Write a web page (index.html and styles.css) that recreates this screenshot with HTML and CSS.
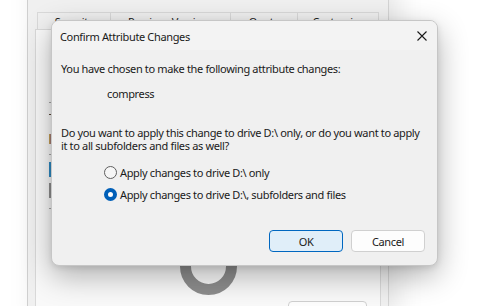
FILE: index.html
```html
<!DOCTYPE html>
<html>
<head>
<meta charset="utf-8">
<link rel="stylesheet" href="styles.css">
</head>
<body>
<div class="desktop">
  <div class="bgwin">
    <div class="tabs">
      <div class="tab t1">Security</div>
      <div class="tab t2">Previous Versions</div>
      <div class="tab t3">Quota</div>
      <div class="tab t4">Customize</div>
    </div>
    <div class="panel">
      <div class="marks">
        <div class="mk line"></div>
        <div class="mk dark"></div>
        <div class="mk icon"></div>
        <div class="mk line"></div>
        <div class="mk blue"></div>
        <div class="mk gray"></div>
        <div class="mk line"></div>
      </div>
      <div class="ring"></div>
      <div class="bgbtn"></div>
    </div>
  </div>

  <div class="dialog">
    <div class="titlebar">
      <span class="title">Confirm Attribute Changes</span>
      <svg class="close" width="10" height="10" viewBox="0 0 10 10"><path d="M0.5 0.5 L9.5 9.5 M9.5 0.5 L0.5 9.5" stroke="#1a1a1a" stroke-width="1.1" fill="none"/></svg>
    </div>
    <div class="content">
      <p class="line">You have chosen to make the following attribute changes:</p>
      <p class="line attr">compress</p>
      <p class="line question">Do you want to apply this change to drive D:\ only, or do you want to apply it to all subfolders and files as well?</p>
      <div class="options">
        <label class="opt"><span class="radio"></span>Apply changes to drive D:\ only</label>
        <label class="opt"><span class="radio on"></span>Apply changes to drive D:\, subfolders and files</label>
      </div>
      <div class="buttons">
        <div class="btn primary">OK</div>
        <div class="btn">Cancel</div>
      </div>
    </div>
  </div>
</div>
</body>
</html>
```

FILE: styles.css
```css
html, body {
  margin: 0;
  padding: 0;
  width: 493px;
  height: 306px;
  overflow: hidden;
  background: #ffffff;
  font-family: "Noto Sans", "Open Sans", sans-serif;
  font-size: 11px;
  letter-spacing: -0.35px;
  color: #1a1a1a;
}
.desktop {
  position: relative;
  width: 493px;
  height: 306px;
  overflow: hidden;
}
.bgwin {
  position: absolute;
  left: 27px;
  top: -20px;
  width: 362px;
  height: 340px;
  background: #f0f0f0;
  border-left: 1px solid #cfcfcf;
  border-right: 1px solid #d4d4d4;
  box-shadow: 8px 0 26px rgba(0,0,0,0.10);
  box-sizing: border-box;
  padding: 32px 7px 0 7px;
}
.tabs {
  display: flex;
  height: 17px;
  padding-left: 2px;
}
.tab {
  border: 1px solid #d9d9d9;
  border-bottom: none;
  background: #f0f0f0;
  box-sizing: border-box;
  text-align: center;
  padding-top: 1px;
  font-size: 11px;
  color: #1a1a1a;
}
.tab + .tab { border-left: none; }
.t1 { width: 74px; }
.t2 { width: 120px; }
.t3 { width: 67px; }
.t4 { width: 81px; }
.panel {
  position: relative;
  height: 290px;
  background: #f9f9f9;
  border: 1px solid #d9d9d9;
  width: 346px;
  box-sizing: border-box;
}
.marks {
  display: flex;
  flex-direction: column;
  align-items: flex-start;
  padding-left: 13px;
  padding-top: 72px;
}
.mk { width: 3px; }
.mk.line { height: 1px; background: #a8a8a8; }
.mk.line:nth-child(1) { margin-bottom: 11px; }
.mk.dark { height: 1px; background: #5a4a3a; margin-bottom: 19px; }
.mk.icon { height: 10px; background: linear-gradient(90deg, #d7b04a, #7a4fa0); margin-bottom: 10px; }
.mk.line:nth-child(4) { margin-bottom: 7px; }
.mk.blue { height: 15px; background: #2f8bc4; margin-bottom: 6px; }
.mk.gray { height: 15px; background: #8f8f8f; margin-bottom: 10px; }
.ring {
  position: absolute;
  left: 144px;
  top: 208px;
  width: 57px;
  height: 57px;
  border-radius: 50%;
  border: 11px solid #8d8d8d;
  box-sizing: border-box;
}
.bgbtn {
  position: absolute;
  left: 252px;
  top: 271px;
  width: 79px;
  height: 22px;
  background: #fdfdfd;
  border: 1px solid #d0d0d0;
  border-radius: 4px;
  box-sizing: border-box;
}
.dialog {
  position: absolute;
  left: 51px;
  top: 20px;
  width: 387px;
  height: 246px;
  box-sizing: border-box;
  background: #f0f0f0;
  border: 1px solid #c6c6c6;
  border-radius: 8px;
  box-shadow: 0 10px 30px rgba(0,0,0,0.30), 0 2px 6px rgba(0,0,0,0.10);
  overflow: hidden;
}
.titlebar {
  height: 29px;
  background: #f3f3f3;
  display: flex;
  align-items: center;
  justify-content: space-between;
  padding: 0 10px 0 8px;
}
.title {
  font-size: 11px;
  color: #1a1a1a;
  padding-top: 1px;
}
.close { display: block; }
.content {
  padding: 12px 10px 0 9px;
}
.line {
  margin: 0;
  line-height: 13px;
}
.attr {
  margin-top: 12px;
  padding-left: 46px;
}
.question {
  margin-top: 26px;
}
.options {
  margin-top: 12px;
  padding-left: 43px;
  display: flex;
  flex-direction: column;
  gap: 6px;
}
.opt {
  display: flex;
  align-items: center;
  height: 16px;
  gap: 3px;
}
.radio {
  width: 13px;
  height: 13px;
  border-radius: 50%;
  box-sizing: border-box;
  border: 1px solid #5f5f5f;
  background: #f6f6f6;
  display: inline-block;
}
.radio.on {
  border: 4px solid #005fb8;
  background: #ffffff;
}
.buttons {
  margin-top: 28px;
  padding-right: 2px;
  display: flex;
  justify-content: flex-end;
  gap: 8px;
}
.btn {
  width: 74px;
  height: 22px;
  box-sizing: border-box;
  border: 1px solid #d0d0d0;
  border-radius: 4px;
  background: #fdfdfd;
  display: flex;
  align-items: center;
  justify-content: center;
  font-size: 11px;
}
.btn.primary {
  background: #e0eef9;
  border-color: #0067c0;
}
```
